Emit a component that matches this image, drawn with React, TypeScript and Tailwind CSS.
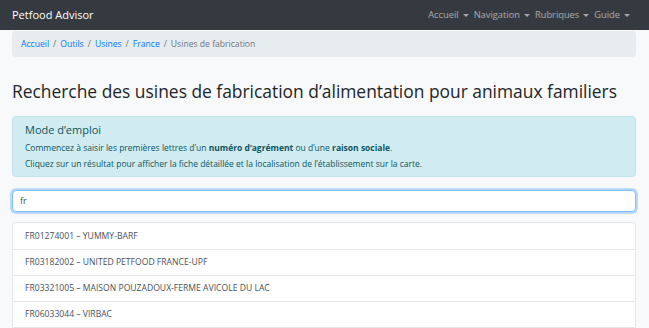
import { ReactNode } from "react";

const font = { fontFamily: '"Open Sans", "Noto Sans", sans-serif' };

function NavItem({ children }: { children: ReactNode }) {
  return (
    <span className="flex items-center gap-[4px] text-[9.3px] text-white/55">
      {children}
      <span className="inline-block w-0 h-0 border-x-[3px] border-x-transparent border-t-[3px] border-t-white/55" />
    </span>
  );
}

const results = [
  "FR01274001 – YUMMY-BARF",
  "FR03182002 – UNITED PETFOOD FRANCE-UPF",
  "FR03321005 – MAISON POUZADOUX-FERME AVICOLE DU LAC",
  "FR06033044 – VIRBAC",
];

export default function App() {
  return (
    <div className="h-screen overflow-hidden bg-[#f8f9fa] text-[#212529]" style={font}>
      <nav className="h-[30px] bg-[#343a40] flex items-center justify-between pl-3 pr-[19px]">
        <span className="text-white text-[11px]">Petfood Advisor</span>
        <div className="flex items-center gap-[5px]">
          <NavItem>Accueil</NavItem>
          <NavItem>Navigation</NavItem>
          <NavItem>Rubriques</NavItem>
          <NavItem>Guide</NavItem>
        </div>
      </nav>

      <div className="pl-3 pr-[13px]">
        <div className="mt-px h-[26px] bg-[#e9ecef] rounded flex items-center px-[9px] text-[8.6px] gap-[4px]">
          <span className="text-[#007bff]">Accueil</span>
          <span className="text-[#6c757d]">/</span>
          <span className="text-[#007bff]">Outils</span>
          <span className="text-[#6c757d]">/</span>
          <span className="text-[#007bff]">Usines</span>
          <span className="text-[#6c757d]">/</span>
          <span className="text-[#007bff]">France</span>
          <span className="text-[#6c757d]">/</span>
          <span className="text-[#6c757d]">Usines de fabrication</span>
        </div>

        <h1 className="mt-[22px] text-[17.4px] leading-[24px] font-normal whitespace-nowrap">
          Recherche des usines de fabrication d’alimentation pour animaux familiers
        </h1>

        <div className="mt-[13px] h-[61px] bg-[#d1ecf1] border border-[#bee5eb] rounded text-[#0c5460] px-3 pt-[5px]">
          <h4 className="text-[11px] leading-[15px] mb-[3px]">Mode d’emploi</h4>
          <p className="text-[8.5px] leading-[16px] whitespace-nowrap">
            Commencez à saisir les premières lettres d’un <b>numéro d’agrément</b> ou d’une{" "}
            <b>raison sociale</b>.
          </p>
          <p className="text-[8.5px] leading-[16px] whitespace-nowrap">
            Cliquez sur un résultat pour afficher la fiche détaillée et la localisation de
            l’établissement sur la carte.
          </p>
        </div>

        <div className="mt-[13px] h-[22px] bg-white border border-[#80bdff] rounded shadow-[0_0_0_2px_rgba(0,123,255,0.25)] flex items-center px-[7px] text-[9px] text-[#495057]">
          fr
        </div>

        <ul className="mt-[10px] bg-white border border-black/10 rounded-t">
          {results.map((r, i) => (
            <li
              key={r}
              className={`h-[26px] flex items-center px-3 text-[8.6px] text-[#495057] ${i > 0 ? "border-t border-black/10" : ""}`}
            >
              {r}
            </li>
          ))}
        </ul>
      </div>
    </div>
  );
}
